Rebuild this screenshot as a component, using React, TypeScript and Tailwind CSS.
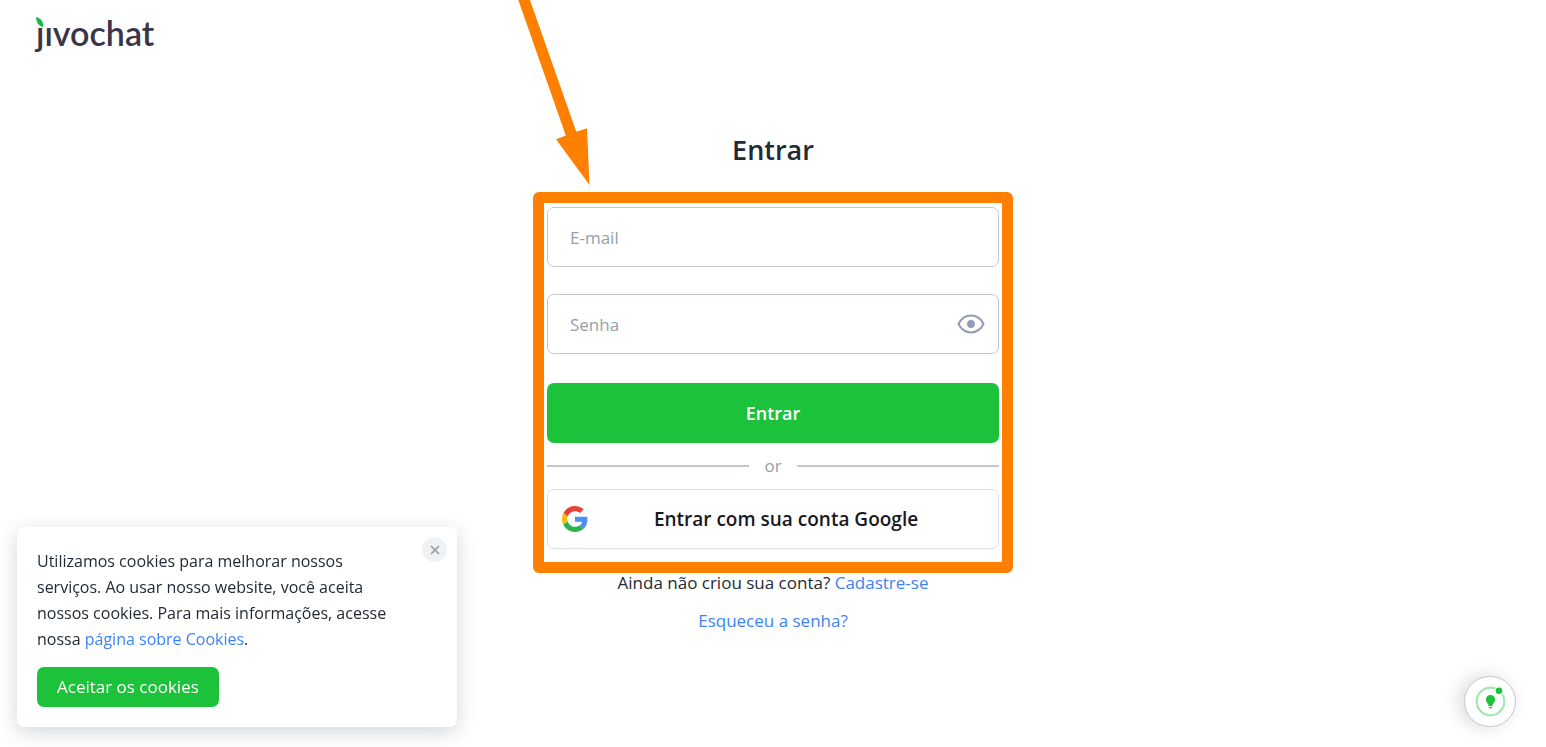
import { useState } from "react";

function Logo() {
  return (
    <a
      href="#"
      aria-label="jivochat"
      className="relative inline-block font-['Lato',sans-serif] text-[34px] leading-[34px] font-semibold text-[#3a3548]"
    >
      ȷıvochat
      <svg viewBox="0 0 8 12" className="absolute top-px left-0 h-3 w-2" aria-hidden="true">
        <path d="M0 0C4.500 1 7.800 4 7 10C3 9.200 0.200 6 0 0Z" fill="#17b84b" />
      </svg>
    </a>
  );
}

function GoogleIcon() {
  return (
    <svg viewBox="0 0 48 48" className="h-[26px] w-[26px] shrink-0" aria-hidden="true">
      <path fill="#EA4335" d="M24 9.5c3.54 0 6.71 1.22 9.21 3.6l6.85-6.85C35.9 2.38 30.47 0 24 0 14.62 0 6.51 5.38 2.56 13.22l7.98 6.19C12.43 13.72 17.74 9.5 24 9.5z" />
      <path fill="#4F8DF7" d="M46.98 24.55c0-1.57-.15-3.09-.38-4.55H24v9.02h12.94c-.58 2.96-2.26 5.48-4.78 7.18l7.73 6c4.51-4.18 7.09-10.36 7.09-17.65z" />
      <path fill="#FBBC05" d="M10.53 28.59c-.48-1.45-.76-2.99-.76-4.59s.27-3.14.76-4.59l-7.98-6.19C.92 16.46 0 20.12 0 24c0 3.88.92 7.54 2.56 10.78l7.97-6.19z" />
      <path fill="#2DB14A" d="M24 48c6.48 0 11.93-2.13 15.89-5.81l-7.73-6c-2.15 1.45-4.92 2.3-8.16 2.3-6.26 0-11.57-4.22-13.47-9.91l-7.98 6.19C6.51 42.62 14.62 48 24 48z" />
    </svg>
  );
}

function EyeIcon() {
  return (
    <svg viewBox="0 0 28 20" className="h-5 w-7" aria-hidden="true">
      <path
        d="M1.5 10C4.2 4.6 8.6 1.6 14 1.6S23.800 4.600 26.500 10C23.800 15.400 19.400 18.400 14 18.400S4.200 15.400 1.500 10Z"
        fill="none"
        stroke="#939bb5"
        strokeWidth="2"
        strokeLinejoin="round"
      />
      <circle cx="14" cy="10" r="3.9" fill="#939bb5" />
    </svg>
  );
}

function Arrow() {
  return (
    <svg
      viewBox="0 0 100 190"
      className="pointer-events-none absolute -top-[203px] -left-11 h-[190px] w-[100px]"
      aria-hidden="true"
    >
      <path d="M18.300 0L65.800 135.500L56 139.300L89.500 185L87 128.300L76.300 131.800L30 0Z" fill="#ff8000" />
    </svg>
  );
}

const fieldClass =
  "h-[60px] w-full rounded-[7px] border border-[#c3c7d0] bg-white pt-px pl-[22px] text-[17px] text-[#222b33] outline-none placeholder:text-[#969fa8]";

function LoginForm() {
  const [visible, setVisible] = useState(false);
  return (
    <form
      className="relative w-full max-w-[480px] rounded-[6px] border-[11px] border-[#ff8000] px-[3px] pt-1 pb-[13px]"
      onSubmit={(e) => e.preventDefault()}
    >
      <Arrow />
      <input type="email" aria-label="E-mail" placeholder="E-mail" className={fieldClass} />
      <div className="relative mt-[27px]">
        <input
          type={visible ? "text" : "password"}
          aria-label="Senha"
          placeholder="Senha"
          className={fieldClass}
        />
        <button
          type="button"
          aria-label="Mostrar senha"
          onClick={() => setVisible(!visible)}
          className="absolute inset-y-0 right-[14px] flex items-center"
        >
          <EyeIcon />
        </button>
      </div>
      <button
        type="submit"
        className="mt-[29px] h-[60px] w-full rounded-[7px] bg-[#1bc23a] text-lg font-semibold text-white"
      >
        Entrar
      </button>
      <div className="flex h-[46px] items-center gap-[15px] text-[17px] text-[#969fa8]">
        <span className="h-[2px] flex-1 bg-[#c3c7d0]" />
        or
        <span className="h-[2px] flex-1 bg-[#c3c7d0]" />
      </div>
      <button
        type="button"
        className="flex h-[60px] w-full items-center rounded-[7px] border border-[#dfe0e8] bg-white px-[14px] text-[19px] font-semibold text-[#18191f]"
      >
        <GoogleIcon />
        <span className="flex-1 text-center">Entrar com sua conta Google</span>
      </button>
    </form>
  );
}

function CookieNotice() {
  return (
    <aside className="fixed bottom-5 left-[17px] w-[440px] rounded-[7px] bg-white p-5 text-[#222b33] shadow-[0_5px_20px_rgba(34,48,73,0.2)]">
      <p className="pt-px pr-10 text-base leading-[26px]">
        Utilizamos cookies para melhorar nossos serviços. Ao usar nosso website, você aceita nossos
        cookies. Para mais informações, acesse nossa{" "}
        <a href="#" className="text-[#3d83f5]">página sobre Cookies</a>.
      </p>
      <button type="button" className="mt-[15px] h-10 rounded-[7px] bg-[#1bc23a] px-5 text-[17px] text-white">
        Aceitar os cookies
      </button>
      <button
        type="button"
        aria-label="Fechar"
        className="absolute top-[10px] right-[10px] flex h-[25px] w-[25px] items-center justify-center rounded-full bg-[#eff2f4]"
      >
        <svg viewBox="0 0 10 10" className="h-[10px] w-[10px]" aria-hidden="true">
          <path d="M1 1L9 9M9 1L1 9" stroke="#969ba3" strokeWidth="1.600" />
        </svg>
      </button>
    </aside>
  );
}

function HintButton() {
  return (
    <button
      type="button"
      aria-label="Dicas"
      className="fixed right-[30px] bottom-5 flex h-[51px] w-[52px] items-center justify-center rounded-full border border-[#c3c7d0] bg-white shadow-[-5px_0_18px_rgba(0,0,0,0.15)]"
    >
      <svg viewBox="0 0 32 32" className="h-8 w-8" aria-hidden="true">
        <circle cx="16.500" cy="15.500" r="13.800" fill="none" stroke="#a5e8b1" strokeWidth="2.300" />
        <circle cx="25" cy="4.700" r="4.600" fill="#fff" />
        <circle cx="25" cy="4.700" r="3.300" fill="#1bc23a" />
        <path
          d="M16.500 9a4.600 4.600 0 0 1 4.600 4.600c0 2-1.100 3-2 4.200-.5.700-.6 1.400-.6 2.100h-4c0-.7-.1-1.400-.6-2.100-.9-1.200-2-2.200-2-4.200A4.600 4.600 0 0 1 16.500 9ZM15 21.100h3.200v1.200h-3.200Z"
          fill="#1bc23a"
        />
      </svg>
    </button>
  );
}

export default function App() {
  return (
    <div className="min-h-screen bg-white font-['Open_Sans','Noto_Sans',sans-serif] text-[17px] text-[#222b33]">
      <header className="flex px-9 pt-4">
        <Logo />
      </header>
      <main className="flex flex-col items-center px-4 pt-[80px]">
        <h1 className="text-[27px] leading-10 font-semibold">Entrar</h1>
        <div className="mt-[22px] flex w-full justify-center">
          <LoginForm />
        </div>
        <p className="leading-5">
          Ainda não criou sua conta?{" "}
          <a href="#" className="text-[#3d83f5]">Cadastre-se</a>
        </p>
        <a href="#" className="mt-[18px] leading-5 text-[#3d83f5]">Esqueceu a senha?</a>
      </main>
      <CookieNotice />
      <HintButton />
    </div>
  );
}
